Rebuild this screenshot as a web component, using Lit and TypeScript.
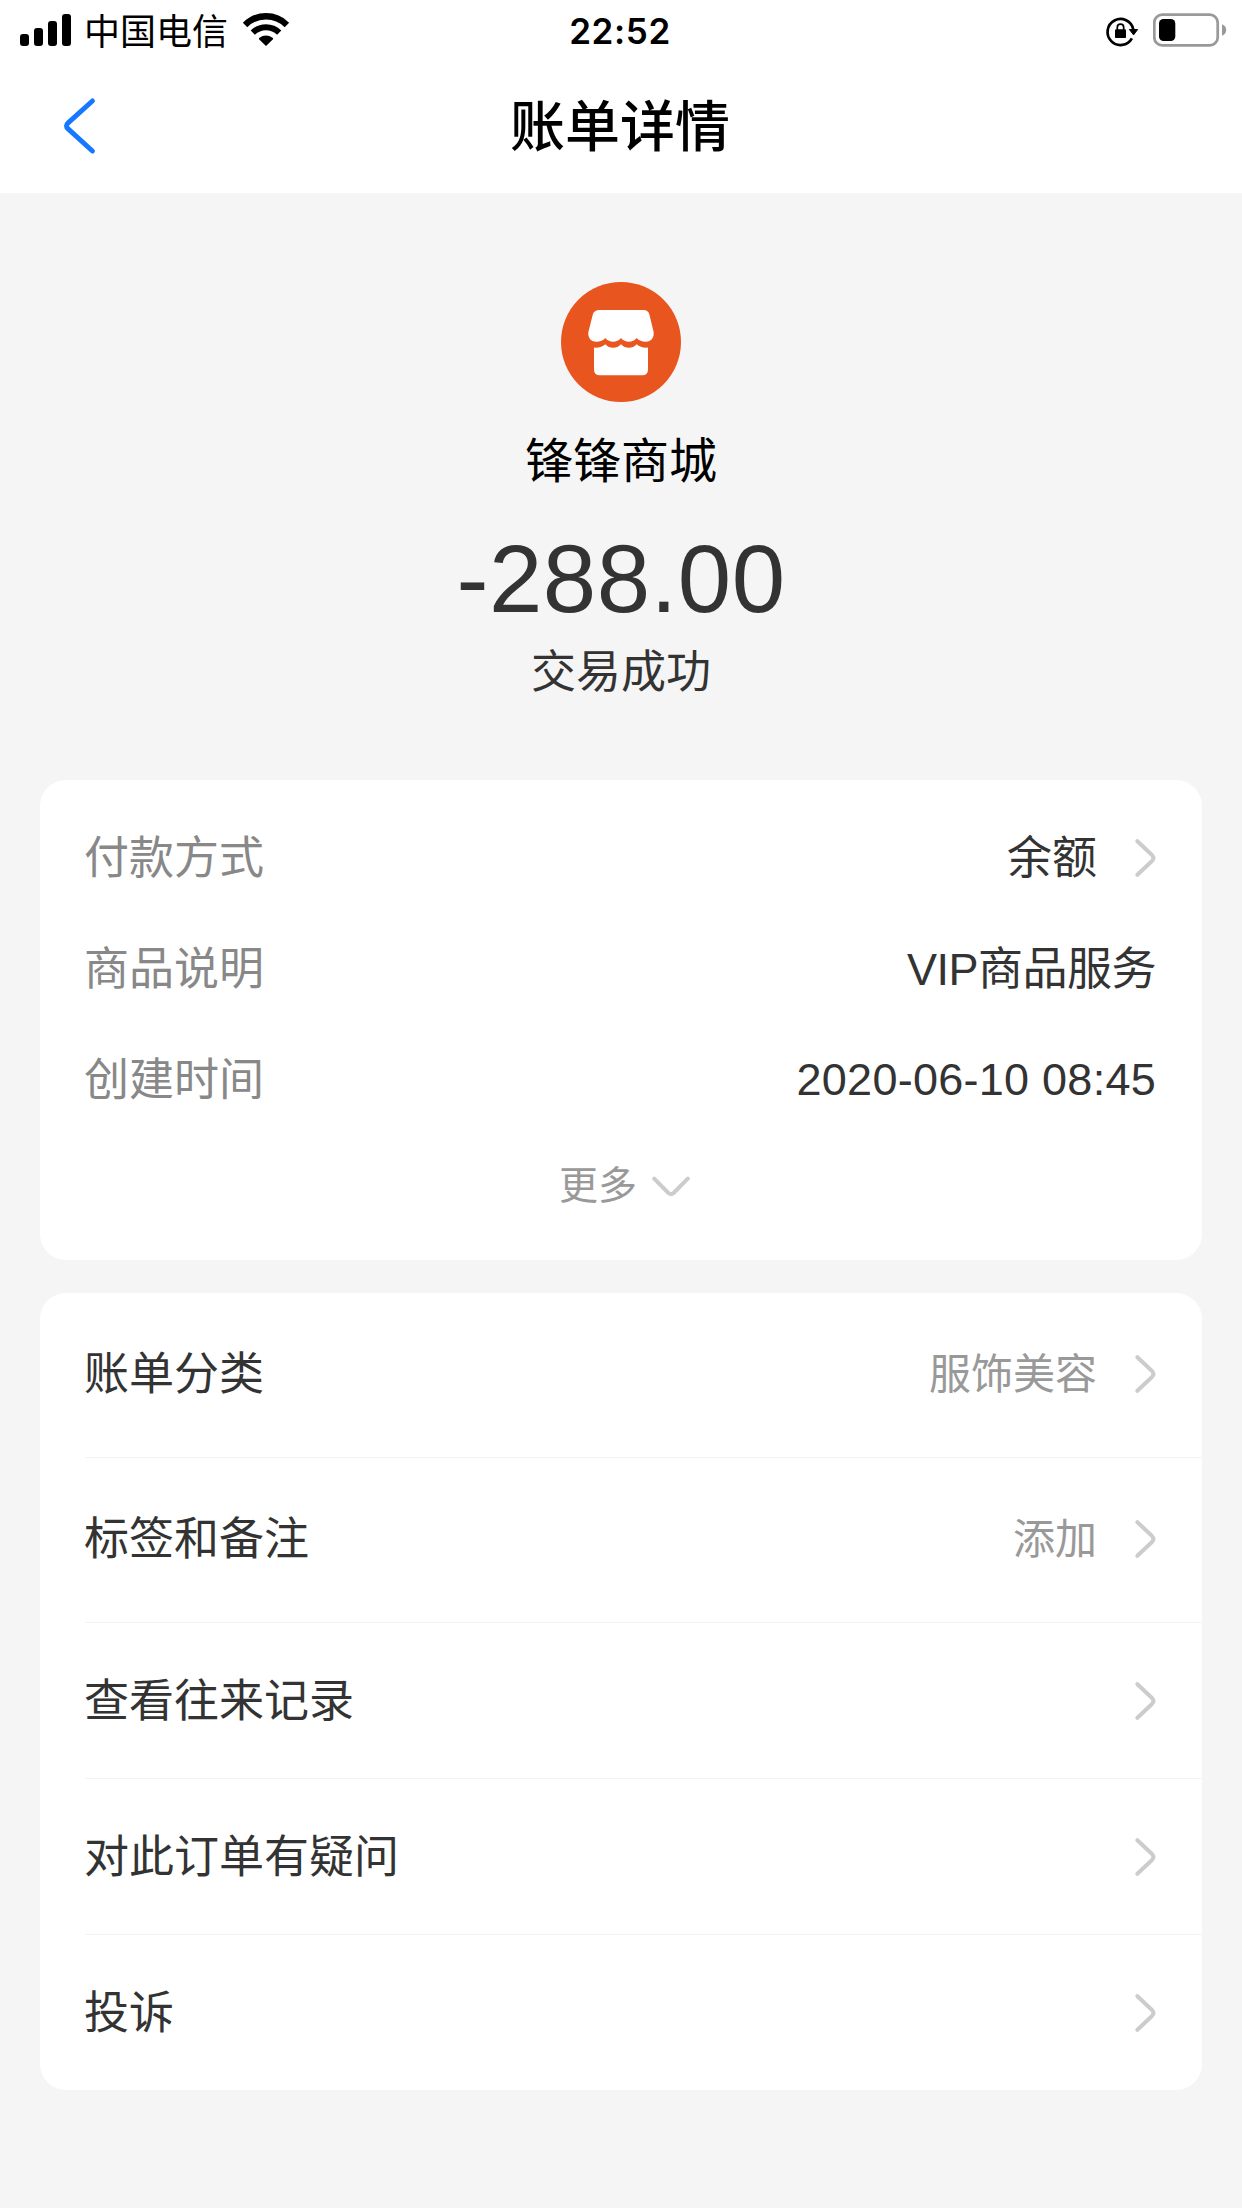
import { LitElement, html, css, svg, nothing } from "lit";
import { customElement, property } from "lit/decorators.js";

interface DetailRow {
  label: string;
  value: string;
  link?: boolean;
  tone?: "tight" | "wide";
}

interface ActionRow {
  label: string;
  value?: string;
  tall?: boolean;
}

const DETAILS: DetailRow[] = [
  { label: "付款方式", value: "余额", link: true },
  { label: "商品说明", value: "VIP商品服务", tone: "tight" },
  { label: "创建时间", value: "2020-06-10 08:45", tone: "wide" },
];

const ACTIONS: ActionRow[] = [
  { label: "账单分类", value: "服饰美容", tall: true },
  { label: "标签和备注", value: "添加", tall: true },
  { label: "查看往来记录" },
  { label: "对此订单有疑问" },
  { label: "投诉" },
];

@customElement("chevron-icon")
export class ChevronIcon extends LitElement {
  @property() direction: "right" | "down" = "right";

  static styles = css`
    :host {
      display: block;
      flex: none;
    }
    svg {
      display: block;
    }
    path {
      fill: none;
      stroke: #ccc;
      stroke-width: 4;
      stroke-linecap: round;
      stroke-linejoin: round;
    }
  `;

  render() {
    return this.direction === "down"
      ? html`<svg width="38" height="21" viewBox="0 0 38 21">
          <path d="M2.2 2.6L16.4 17Q19 19.4 21.6 17L35.8 2.6" />
        </svg>`
      : html`<svg width="21" height="38" viewBox="0 0 21 38">
          <path d="M2.4 2.2L17 16Q19.8 19 17 22L2.4 35.8" />
        </svg>`;
  }
}

@customElement("status-bar")
export class StatusBar extends LitElement {
  static styles = css`
    :host {
      display: grid;
      grid-template-columns: 1fr auto 1fr;
      height: 60px;
      color: #000;
    }
    svg {
      display: block;
      flex: none;
    }
    .left,
    .right {
      display: flex;
    }
    .left {
      padding-left: 20px;
    }
    .right {
      justify-content: flex-end;
      padding-right: 15px;
      gap: 14px;
    }
    .carrier {
      margin: 0 14px 0 12px;
      font-size: 36px;
      line-height: 66px;
      height: 60px;
    }
    .time {
      padding-right: 2px;
      font-family: Inter, sans-serif;
      font-weight: 600;
      font-size: 35px;
      line-height: 62px;
      height: 60px;
      letter-spacing: 0.6px;
    }
  `;

  render() {
    return html`
      <div class="left">
        <svg width="52" height="60" viewBox="0 0 52 60">
          <rect x="0" y="34" width="9" height="12" rx="3" />
          <rect x="14" y="28" width="9" height="18" rx="3" />
          <rect x="28" y="21" width="9" height="25" rx="3" />
          <rect x="42" y="14" width="9" height="32" rx="3" />
        </svg>
        <span class="carrier">中国电信</span>
        <svg width="48" height="60" viewBox="0 0 48 60">
          <g fill="none" stroke="#000">
            <path stroke-width="6.3" d="M3.1 24.9A29.6 29.6 0 0 1 44.9 24.9" />
            <path stroke-width="6" d="M10.8 32.6A18.7 18.7 0 0 1 37.2 32.6" />
          </g>
          <path d="M24 46L17 39.2Q16.6 38.2 17.5 37.8A10.6 10.6 0 0 1 30.5 37.8Q31.4 38.2 31 39.2Z" />
        </svg>
      </div>
      <span class="time">22:52</span>
      <div class="right">
        <svg width="34" height="60" viewBox="0 0 34 60">
          <path
            fill="none"
            stroke="#000"
            stroke-width="2.7"
            d="M28.3 29.5A13 13 0 1 0 26.9 38.4"
          />
          <path
            stroke="#000"
            stroke-width="1"
            stroke-linejoin="round"
            d="M24.4 29.5H32.6L28.6 34.9Z"
          />
          <rect x="10" y="29.2" width="11" height="8.9" rx="1.2" />
          <path fill="none" stroke="#000" stroke-width="1.7" d="M12.3 30V27.4A3.2 3.2 0 0 1 18.7 27.4V30" />
        </svg>
        <svg width="74" height="60" viewBox="0 0 74 60">
          <rect x="1.3" y="14.6" width="63.4" height="30.8" rx="8" fill="none" stroke="#999" stroke-width="2.7" />
          <rect x="6" y="19" width="16.3" height="22" rx="4.5" />
          <path d="M69 24.3Q73.2 26 73.2 30T69 35.7Z" fill="#999" />
        </svg>
      </div>
    `;
  }
}

@customElement("app-root")
export class AppRoot extends LitElement {
  static styles = css`
    :host {
      display: block;
      width: 1242px;
      height: 2208px;
      box-sizing: border-box;
      overflow: hidden;
      background: #f5f5f5;
      color: #333;
      font-family: "Liberation Sans", "Noto Sans CJK SC", sans-serif;
      font-size: 45px;
    }
    .header {
      height: 193px;
      background: #fff;
    }
    .nav {
      display: grid;
      grid-template-columns: 119px 1fr 121px;
      align-items: center;
      height: 133px;
    }
    .back {
      display: block;
      margin-left: 62px;
    }
    .title {
      margin: 0;
      text-align: center;
      font-size: 55px;
      font-weight: 500;
      line-height: 80px;
      color: #000;
    }
    .hero {
      display: flex;
      flex-direction: column;
      align-items: center;
      box-sizing: border-box;
      height: 587px;
      padding-top: 89px;
    }
    .logo {
      display: block;
    }
    .merchant {
      margin-top: 27px;
      font-size: 48px;
      line-height: 66px;
      color: #000;
    }
    .amount {
      margin-top: 29px;
      font-size: 96px;
      line-height: 110px;
      letter-spacing: 0.5px;
    }
    .state {
      margin-top: 7px;
      line-height: 64px;
    }
    .card {
      box-sizing: border-box;
      margin: 0 40px;
      padding-left: 45px;
      border-radius: 26px;
      background: #fff;
    }
    .details {
      height: 480px;
      padding-top: 22px;
    }
    .detail {
      display: flex;
      align-items: center;
      height: 111px;
      padding-right: 46px;
      line-height: 64px;
    }
    .label {
      flex: 1;
      margin-left: -1px;
      padding-top: 2px;
    }
    .detail .label {
      color: #888;
    }
    .detail .value {
      padding-top: 2px;
    }
    .detail .tight {
      letter-spacing: -0.5px;
    }
    .detail .wide {
      padding-top: 0;
      letter-spacing: 0.26px;
    }
    .detail chevron-icon,
    .action chevron-icon {
      margin-left: 38px;
    }
    .more {
      display: flex;
      align-items: center;
      justify-content: center;
      gap: 15px;
      height: 102px;
      padding-right: 38px;
      font-size: 39px;
      line-height: 56px;
      color: #999;
    }
    .actions {
      margin-top: 33px;
      height: 797px;
    }
    .action {
      display: flex;
      align-items: center;
      box-sizing: border-box;
      height: 156px;
      padding-right: 46px;
      line-height: 64px;
      border-bottom: 1px solid #f3f3f3;
    }
    .action.tall {
      height: 165px;
      padding-bottom: 3px;
    }
    .action:last-child {
      border-bottom: none;
      height: 155px;
    }
    .action .value {
      padding-top: 3px;
      font-size: 42px;
      color: #999;
    }
  `;

  private storeLogo() {
    return html`<svg class="logo" width="120" height="120" viewBox="0 0 120 120">
      <circle cx="60" cy="60" r="60" fill="#e9551f" />
      ${svg`<path fill="#fff" d="M38.5 28H82.5Q87.3 28 88.4 32.5L92.5 49.5C93.6 55 90.5 59.8 84.6 59.8Q79 59.8 75.7 56Q72.5 59.8 67.8 59.8Q63.2 59.8 60 56Q56.8 59.8 52.2 59.8Q47.5 59.8 44.3 56Q41 59.8 35.4 59.8C29.5 59.8 26.4 55 27.5 49.5L31.8 32.5Q33 28 38.5 28Z"/>
      <path fill="#fff" d="M33 65.6Q40 66.2 44.3 62.3Q47.5 65.8 52.2 65.8Q56.8 65.8 60 62.3Q63.2 65.8 67.8 65.8Q72.5 65.8 75.7 62.3Q80 66.2 87 65.6V87.5Q87 93.3 81.2 93.3H38.8Q33 93.3 33 87.5Z"/>`}
    </svg>`;
  }

  render() {
    return html`
      <header class="header">
        <status-bar></status-bar>
        <nav class="nav">
          <svg class="back" width="36" height="60" viewBox="0 0 36 60">
            <path
              d="M30.4 4L6.4 25.6Q2.6 28.9 6.4 32.2L30.4 54"
              fill="none"
              stroke="#1677ff"
              stroke-width="5"
              stroke-linecap="round"
            />
          </svg>
          <h1 class="title">账单详情</h1>
        </nav>
      </header>
      <section class="hero">
        ${this.storeLogo()}
        <div class="merchant">锋锋商城</div>
        <div class="amount">-288.00</div>
        <div class="state">交易成功</div>
      </section>
      <section class="card details">
        ${DETAILS.map(
          (row) => html`<div class="detail">
            <span class="label">${row.label}</span>
            <span class="value ${row.tone ?? ""}">${row.value}</span>
            ${row.link ? html`<chevron-icon></chevron-icon>` : nothing}
          </div>`
        )}
        <div class="more">
          <span>更多</span>
          <chevron-icon direction="down"></chevron-icon>
        </div>
      </section>
      <section class="card actions">
        ${ACTIONS.map(
          (row) => html`<div class="action ${row.tall ? "tall" : ""}">
            <span class="label">${row.label}</span>
            ${row.value ? html`<span class="value">${row.value}</span>` : nothing}
            <chevron-icon></chevron-icon>
          </div>`
        )}
      </section>
    `;
  }
}
